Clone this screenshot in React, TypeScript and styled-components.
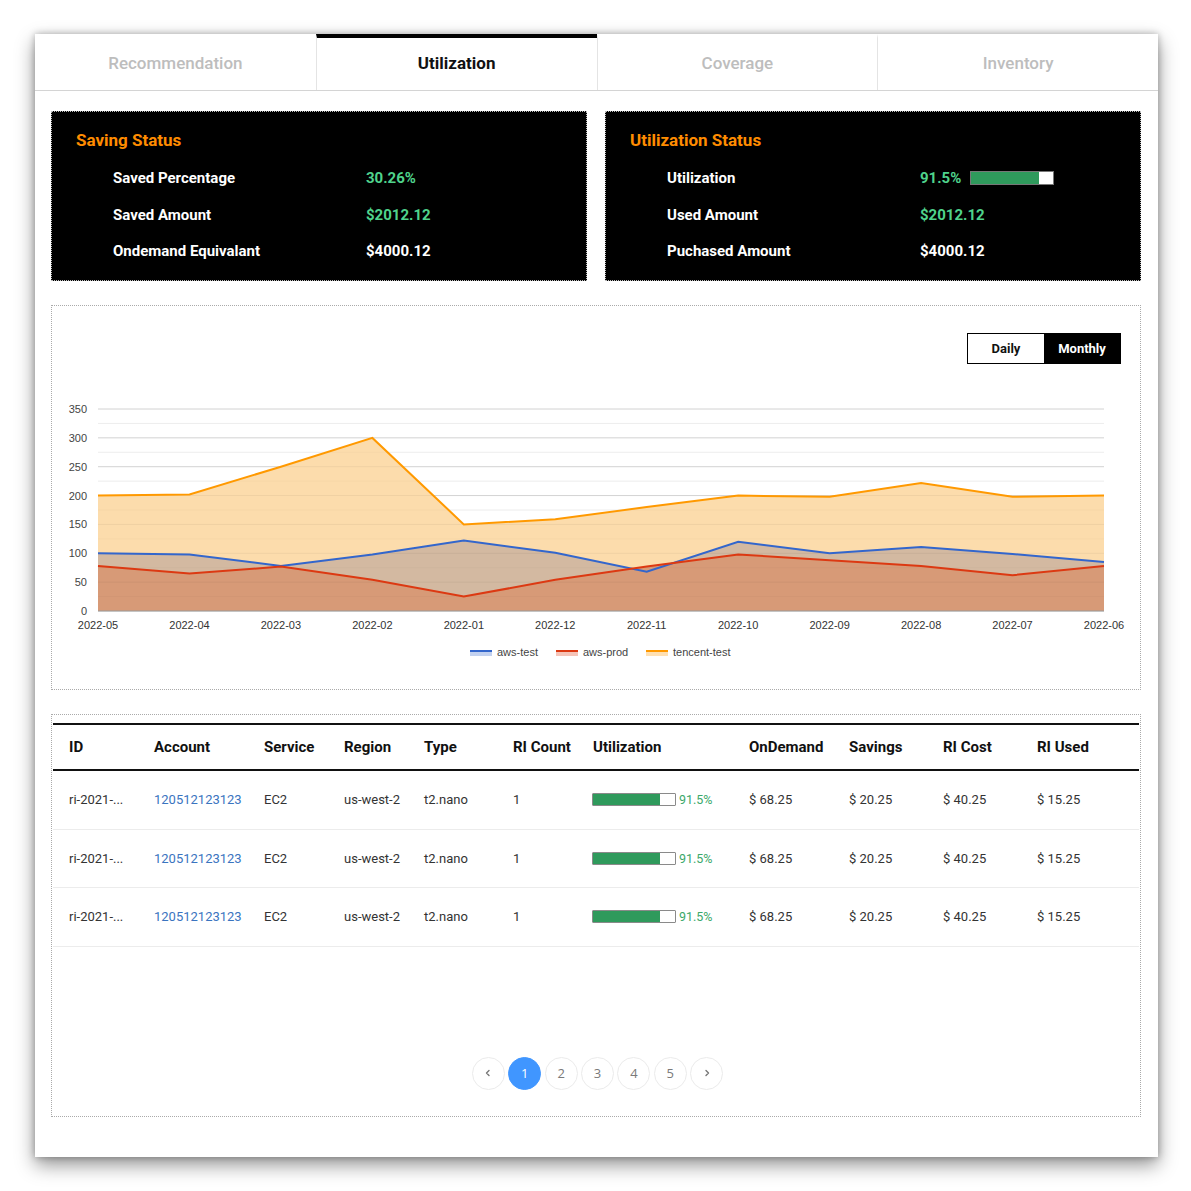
import React from "react";
import styled, { createGlobalStyle } from "styled-components";

const Global = createGlobalStyle`
  html, body { margin: 0; padding: 0; background: #fff; }
  body { font-family: Roboto, "Liberation Sans", Arial, sans-serif; }
  * { box-sizing: border-box; }
`;

const Page = styled.div`
  padding: 34px 33px 34px 35px;
`;

const Card = styled.div`
  width: 1123px;
  background: #fff;
  box-shadow: 0 8px 18px rgba(0, 0, 0, 0.42), 0 0 7px rgba(0, 0, 0, 0.28);
  padding-bottom: 40px;
`;

const Tabs = styled.div`
  display: grid;
  grid-template-columns: repeat(4, 1fr);
  border-bottom: 1px solid #d4d4d4;
`;

const Tab = styled.div<{ $active?: boolean }>`
  height: 56px;
  display: flex;
  align-items: center;
  justify-content: center;
  padding-bottom: 3px;
  font-size: 17px;
  font-weight: ${(p) => (p.$active ? 700 : 500)};
  color: ${(p) => (p.$active ? "#111" : "#bdbdbd")};
  border-top: 4px solid ${(p) => (p.$active ? "#000" : "transparent")};
  & + & {
    border-left: 1px solid #e4e4e4;
  }
`;

const Content = styled.div`
  padding: 20px 17px 0 16px;
  display: flex;
  flex-direction: column;
  gap: 24px;
`;

const StatusGrid = styled.div`
  display: grid;
  grid-template-columns: 1fr 1fr;
  gap: 18px;
`;

const StatusCard = styled.div`
  background: #000;
  border: 1px dotted #bdbdbd;
  height: 170px;
  padding: 16px 24px 12px;
`;

const StatusTitle = styled.div`
  color: #ff8c00;
  font-size: 17px;
  font-weight: 700;
  line-height: 24px;
  margin-bottom: 8px;
`;

const StatusRow = styled.div`
  display: grid;
  grid-template-columns: 253px 1fr;
  align-items: center;
  height: 36.5px;
  padding-left: 37px;
  font-size: 15px;
  font-weight: 700;
  color: #fff;
`;

const StatusValue = styled.div<{ $green?: boolean }>`
  display: flex;
  align-items: center;
  gap: 9px;
  color: ${(p) => (p.$green ? "#4fd38c" : "#fff")};
`;

const BigBar = styled.div`
  width: 84px;
  height: 14px;
  background: #fff;
  border: 1px solid #777;
  display: flex;
`;

const BarFill = styled.div`
  height: 100%;
  background: #2f9a5c;
`;

const ChartBox = styled.div`
  border: 1px dotted #aaa;
  height: 385px;
  padding: 27px 19px 0 0;
  display: flex;
  flex-direction: column;
  gap: 16px;
`;

const Toggle = styled.div`
  align-self: flex-end;
  display: flex;
  border: 1.5px solid #000;
  height: 31px;
`;

const ToggleBtn = styled.div<{ $active?: boolean }>`
  width: ${(p) => (p.$active ? 76 : 76)}px;
  display: flex;
  align-items: center;
  justify-content: center;
  font-size: 13px;
  font-weight: 700;
  background: ${(p) => (p.$active ? "#000" : "#fff")};
  color: ${(p) => (p.$active ? "#fff" : "#111")};
`;

const ChartSvg = styled.svg`
  display: block;
  width: 1088px;
  height: 300px;
  font-family: "Liberation Sans", Arial, sans-serif;
`;

const TableBox = styled.div`
  border: 1px dotted #aaa;
  padding: 8px 1px 26px;
  display: flex;
  flex-direction: column;
`;

const COLS = "85px 110px 80px 80px 89px 80px 156px 100px 94px 94px 118px";

const HeadRow = styled.div`
  display: grid;
  grid-template-columns: ${COLS};
  height: 48px;
  border-top: 2px solid #111;
  border-bottom: 2px solid #111;
  align-items: center;
`;

const HeadCell = styled.div`
  padding-left: 16px;
  font-size: 15px;
  font-weight: 700;
  color: #111;
  white-space: nowrap;
`;

const Row = styled.div`
  display: grid;
  grid-template-columns: ${COLS};
  height: 58.5px;
  border-bottom: 1px solid #ececec;
  align-items: center;
`;

const Cell = styled.div<{ $link?: boolean }>`
  padding-left: 16px;
  font-size: 13px;
  color: ${(p) => (p.$link ? "#3a74c0" : "#333")};
  white-space: nowrap;
`;

const UtilCell = styled.div`
  padding-left: 15px;
  display: flex;
  align-items: center;
  gap: 3px;
`;

const SmallBar = styled.div`
  width: 84px;
  height: 13px;
  border: 1px solid #8a8a8a;
  border-radius: 1px;
  background: #fff;
  display: flex;
`;

const UtilText = styled.span`
  font-size: 12.5px;
  color: #3ba86a;
`;

const Pager = styled.div`
  margin-top: 110px;
  display: flex;
  justify-content: center;
  gap: 3.4px;
  padding-left: 3px;
`;

const PageBtn = styled.div<{ $active?: boolean }>`
  width: 33px;
  height: 33px;
  border-radius: 50%;
  border: 1px solid ${(p) => (p.$active ? "#4096ff" : "#ebebeb")};
  background: ${(p) => (p.$active ? "#4096ff" : "#fff")};
  color: ${(p) => (p.$active ? "#fff" : "#7a7a7a")};
  display: flex;
  align-items: center;
  justify-content: center;
  font-family: "Open Sans", Roboto, sans-serif;
  font-size: 13px;
`;

const labels = [
  "2022-05", "2022-04", "2022-03", "2022-02", "2022-01", "2022-12",
  "2022-11", "2022-10", "2022-09", "2022-08", "2022-07", "2022-06",
];
const blue = [100, 98, 78, 98, 122, 101, 68, 120, 100, 111, 99, 85];
const red = [78, 65, 77, 54, 25, 54, 77, 98, 88, 78, 62, 78];
const orange = [200, 202, 250, 300, 150, 159, 180, 200, 198, 222, 198, 200];

const X = (i: number) => 46 + i * (1006 / 11);
const Y = (v: number) => 231 - (v * 202) / 350;

const linePts = (d: number[]) => d.map((v, i) => `${X(i).toFixed(1)},${Y(v).toFixed(1)}`).join(" ");
const areaPts = (d: number[]) => `${X(0)},${Y(0)} ${linePts(d)} ${X(d.length - 1)},${Y(0)}`;

const legend = [
  { name: "aws-test", x: 418, c: "#3366cc", f: "#c2d1f0" },
  { name: "aws-prod", x: 504, c: "#dc3912", f: "#f5c4b8" },
  { name: "tencent-test", x: 594, c: "#ff9900", f: "#ffe0b2" },
];

function Chart() {
  const majors = [0, 50, 100, 150, 200, 250, 300, 350];
  const minors = [25, 75, 125, 175, 225, 275, 325];
  return (
    <ChartSvg viewBox="0 0 1088 300">
      {minors.map((v) => (
        <line key={"m" + v} x1={46} x2={1052} y1={Y(v)} y2={Y(v)} stroke="#f2f2f2" strokeWidth={1} />
      ))}
      {majors.map((v) => (
        <line key={"g" + v} x1={46} x2={1052} y1={Y(v)} y2={Y(v)} stroke="#dedede" strokeWidth={1} />
      ))}
      <polygon points={areaPts(orange)} fill="#fcdcac" />
      <polygon points={areaPts(blue)} fill="#d3b9a1" />
      <polygon points={areaPts(red)} fill="#d79a77" />
      {minors.map((v) => (
        <line key={"mo" + v} x1={46} x2={1052} y1={Y(v)} y2={Y(v)} stroke="rgba(0,0,0,0.025)" strokeWidth={1} />
      ))}
      {majors.slice(1).map((v) => (
        <line key={"go" + v} x1={46} x2={1052} y1={Y(v)} y2={Y(v)} stroke="rgba(0,0,0,0.05)" strokeWidth={1} />
      ))}
      <line x1={46} x2={1052} y1={Y(0)} y2={Y(0)} stroke="#999" strokeWidth={1} />
      <polyline points={linePts(orange)} fill="none" stroke="#ff9900" strokeWidth={2} />
      <polyline points={linePts(blue)} fill="none" stroke="#3366cc" strokeWidth={2} />
      <polyline points={linePts(red)} fill="none" stroke="#dc3912" strokeWidth={2} />
      {majors.map((v) => (
        <text key={"yl" + v} x={35} y={Y(v) + 4} textAnchor="end" fontSize={11} fill="#444">
          {v}
        </text>
      ))}
      {labels.map((l, i) => (
        <text key={l} x={X(i)} y={249} textAnchor="middle" fontSize={11} fill="#333">
          {l}
        </text>
      ))}
      {legend.map((g) => (
        <g key={g.name}>
          <rect x={g.x} y={271} width={22} height={5} fill={g.f} />
          <line x1={g.x} x2={g.x + 22} y1={271} y2={271} stroke={g.c} strokeWidth={2} />
          <text x={g.x + 27} y={276} fontSize={11} fill="#444">
            {g.name}
          </text>
        </g>
      ))}
    </ChartSvg>
  );
}

const rows = [0, 1, 2];

function Chevron({ dir }: { dir: "l" | "r" }) {
  return (
    <svg width="8" height="8" viewBox="0 0 8 8">
      <path
        d={dir === "l" ? "M5 1.5 L2.5 4 L5 6.5" : "M3 1.5 L5.5 4 L3 6.5"}
        fill="none"
        stroke="#777"
        strokeWidth={1.4}
        strokeLinecap="round"
        strokeLinejoin="round"
      />
    </svg>
  );
}

export default function App() {
  return (
    <>
      <Global />
      <Page>
        <Card>
          <Tabs>
            <Tab>Recommendation</Tab>
            <Tab $active>Utilization</Tab>
            <Tab>Coverage</Tab>
            <Tab>Inventory</Tab>
          </Tabs>
          <Content>
            <StatusGrid>
              <StatusCard>
                <StatusTitle>Saving Status</StatusTitle>
                <StatusRow>
                  <span>Saved Percentage</span>
                  <StatusValue $green>30.26%</StatusValue>
                </StatusRow>
                <StatusRow>
                  <span>Saved Amount</span>
                  <StatusValue $green>$2012.12</StatusValue>
                </StatusRow>
                <StatusRow>
                  <span>Ondemand Equivalant</span>
                  <StatusValue>$4000.12</StatusValue>
                </StatusRow>
              </StatusCard>
              <StatusCard>
                <StatusTitle>Utilization Status</StatusTitle>
                <StatusRow>
                  <span>Utilization</span>
                  <StatusValue $green>
                    91.5%
                    <BigBar>
                      <BarFill style={{ width: "82%" }} />
                    </BigBar>
                  </StatusValue>
                </StatusRow>
                <StatusRow>
                  <span>Used Amount</span>
                  <StatusValue $green>$2012.12</StatusValue>
                </StatusRow>
                <StatusRow>
                  <span>Puchased Amount</span>
                  <StatusValue>$4000.12</StatusValue>
                </StatusRow>
              </StatusCard>
            </StatusGrid>

            <ChartBox>
              <Toggle>
                <ToggleBtn>Daily</ToggleBtn>
                <ToggleBtn $active>Monthly</ToggleBtn>
              </Toggle>
              <Chart />
            </ChartBox>

            <TableBox>
              <HeadRow>
                {["ID", "Account", "Service", "Region", "Type", "RI Count", "Utilization", "OnDemand", "Savings", "RI Cost", "RI Used"].map((h) => (
                  <HeadCell key={h}>{h}</HeadCell>
                ))}
              </HeadRow>
              {rows.map((r) => (
                <Row key={r}>
                  <Cell>ri-2021-...</Cell>
                  <Cell $link>120512123123</Cell>
                  <Cell>EC2</Cell>
                  <Cell>us-west-2</Cell>
                  <Cell>t2.nano</Cell>
                  <Cell>1</Cell>
                  <UtilCell>
                    <SmallBar>
                      <BarFill style={{ width: "82%" }} />
                    </SmallBar>
                    <UtilText>91.5%</UtilText>
                  </UtilCell>
                  <Cell>$ 68.25</Cell>
                  <Cell>$ 20.25</Cell>
                  <Cell>$ 40.25</Cell>
                  <Cell>$ 15.25</Cell>
                </Row>
              ))}
              <Pager>
                <PageBtn><Chevron dir="l" /></PageBtn>
                <PageBtn $active>1</PageBtn>
                <PageBtn>2</PageBtn>
                <PageBtn>3</PageBtn>
                <PageBtn>4</PageBtn>
                <PageBtn>5</PageBtn>
                <PageBtn><Chevron dir="r" /></PageBtn>
              </Pager>
            </TableBox>
          </Content>
        </Card>
      </Page>
    </>
  );
}
